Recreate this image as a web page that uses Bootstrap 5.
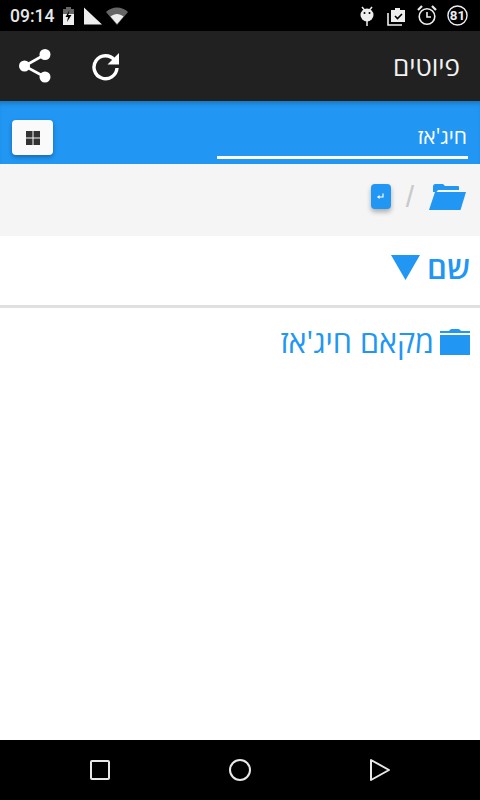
<!DOCTYPE html>
<html lang="he">
<head>
    <meta charset="UTF-8">
    <meta name="viewport" content="width=device-width, initial-scale=1.0">
    <title>פיוטים</title>
    <link href="https://cdn.jsdelivr.net/npm/bootstrap@5.3.0/dist/css/bootstrap.min.css" rel="stylesheet">
    <style>
        html, body { height: 800px; overflow: hidden; }
        body { font-family: "Open Sans", "Noto Sans", "Liberation Sans", sans-serif; background: #fff; }
        .phone { height: 800px; }
        .status-bar { height: 31px; background: #000; color: #e8e8e8; font: 500 17.500px Roboto, sans-serif; padding: 0 12px 0 10px; }
        .app-bar { height: 70px; background: #212121; color: #f2f2f2; font-size: 26px; font-weight: 500; padding: 0 20px 0 19px; }
        .search-bar { height: 63px; background: #2196f3; padding: 0 12px; box-shadow: inset 0 5px 5px -3px rgba(0,0,0,.25); }
        .grid-btn { width: 41px; height: 35px; background: #fafafa; border-radius: 4px; box-shadow: 0 2px 4px rgba(0,0,0,.3); margin-top: 10px; }
        .search-box { width: 251px; height: 40px; margin-top: 12px; border-bottom: 3px solid #fff; color: #fff; font-size: 21px; line-height: 35px; text-align: right; padding-right: 1px; }
        .crumbs { height: 72px; background: #f5f5f5; padding: 0 14px 7px 0; color: #c9c9c9; }
        .crumb-btn { width: 20px; height: 25px; border-radius: 4px; background: #2196f3; box-shadow: 0 3px 5px rgba(0,0,0,.3); }
        .crumb-sep { font-size: 30px; line-height: 1; margin: 0 15px; font-family: "Liberation Sans", sans-serif; }
        .head-row { height: 72px; border-bottom: 3px solid #e0e0e0; padding: 0 10px 7px; color: #2196f3; font-size: 31px; font-weight: 600; }
        .head-arrow { margin-right: 7px; }
        .file-row { height: 71px; padding: 0 10px 4px; color: #2196f3; font-size: 30.500px; }
        .file-name { margin-right: 6px; }
        .nav-bar { height: 60px; background: #000; margin-top: auto; }
        .nav-slot { width: 140px; }
    </style>
</head>
<body>
<div class="phone d-flex flex-column">
    <div class="status-bar d-flex align-items-center justify-content-between" dir="ltr">
        <div class="d-flex align-items-center">
            <span>09:14</span>
            <svg class="ms-2" width="13" height="20" viewBox="0 0 13 20"><rect x="4" y="1" width="5" height="2" fill="#666"/><rect x="1" y="3" width="11" height="5" fill="#666"/><rect x="1" y="8" width="11" height="11" fill="#eee"/><path d="M7.500 4 3.500 11h2.500l-1 5 4.500-7H6.300z" fill="#000"/></svg>
            <svg style="margin-left:9px" width="18" height="18" viewBox="0 0 18 18"><path d="M0 0 18 17H0z" fill="#eee" transform="translate(0 .5)"/></svg>
            <svg class="ms-1" width="22" height="18" viewBox="0 0 22 18"><path d="M0 5C6-1 16-1 22 5L11 18z" fill="#666"/><path d="M4.500 9.500c4-3.500 9-3.500 13 0L11 17z" fill="#eee"/></svg>
        </div>
        <div class="d-flex align-items-center">
            <svg width="16" height="20" viewBox="0 0 16 20"><circle cx="8" cy="9" r="6.500" fill="#eee"/><path d="M3 1l2.500 3M13 1l-2.500 3M8 15v5" stroke="#eee" stroke-width="1.500"/><circle cx="5.500" cy="7" r="1" fill="#000"/><circle cx="10.500" cy="7" r="1" fill="#000"/></svg>
            <svg style="margin-left:12px" width="19" height="20" viewBox="0 0 19 20"><path d="M4 4h4V2h5v2h5v12H4z" fill="#eee"/><path d="M8 10l2.500 2.500L15 8" stroke="#000" stroke-width="1.600" fill="none"/><path d="M1 7v12h14" stroke="#eee" stroke-width="1.600" fill="none"/></svg>
            <svg style="margin-left:11px" width="20" height="21" viewBox="0 0 20 21"><circle cx="10" cy="11.500" r="7.800" fill="none" stroke="#eee" stroke-width="1.600"/><path d="M10 7v5h4" fill="none" stroke="#eee" stroke-width="1.600"/><path d="M1 5l4-4M19 5l-4-4" stroke="#eee" stroke-width="2.200"/></svg>
            <svg style="margin-left:10px" width="21" height="21" viewBox="0 0 22 22"><circle cx="11" cy="11" r="10" fill="none" stroke="#eee" stroke-width="1.500"/><text x="11" y="16" text-anchor="middle" font-family="Roboto, sans-serif" font-weight="700" font-size="14" fill="#eee">81</text></svg>
        </div>
    </div>
    <div class="app-bar d-flex align-items-center justify-content-between" dir="ltr">
        <div class="d-flex align-items-center">
            <svg width="32" height="34" viewBox="0 0 32 34"><g fill="#fff"><circle cx="5.500" cy="17" r="5.500"/><circle cx="26" cy="5.500" r="5.500"/><circle cx="26" cy="28" r="5.500"/></g><path d="M26 5.500 5.500 17 26 28" fill="none" stroke="#fff" stroke-width="2.600"/></svg>
            <svg style="margin-left:40px" width="30" height="30" viewBox="0 0 30 30"><path d="M23.500 9A11.500 11.500 0 1 0 26 17" fill="none" stroke="#fff" stroke-width="3.400"/><path d="M28 2V13.500H16.500z" fill="#fff"/></svg>
        </div>
        <div dir="rtl">פיוטים</div>
    </div>
    <div class="search-bar d-flex justify-content-between align-items-center" dir="ltr">
        <div class="grid-btn d-flex align-items-center justify-content-center">
            <svg width="14" height="14" viewBox="0 0 14 14" fill="#333"><rect width="6.500" height="6.500"/><rect x="7.500" width="6.500" height="6.500"/><rect y="7.500" width="6.500" height="6.500"/><rect x="7.500" y="7.500" width="6.500" height="6.500"/></svg>
        </div>
        <div class="search-box" dir="rtl">חיג'אז</div>
    </div>
    <div class="crumbs d-flex align-items-center" dir="rtl">
        <svg width="37" height="27" viewBox="0 0 37 27" fill="#2196f3"><path d="M4 9V3.500Q4 1 6 1h8l2 2h13q1 0 1 1V7H9L7.500 9z"/><path d="M6 9h31l-5.500 18H0z"/></svg>
        <span class="crumb-sep">/</span>
        <div class="crumb-btn d-flex align-items-center justify-content-center">
            <svg width="7" height="7" viewBox="0 0 7 7"><path d="M6 0.500V4H2" fill="none" stroke="#fff" stroke-width="1.200"/><path d="M0 4l2.500-2v4z" fill="#fff"/></svg>
        </div>
    </div>
    <div class="head-row d-flex align-items-center" dir="rtl">
        <span>שם</span>
        <svg class="head-arrow" width="29" height="25" viewBox="0 0 29 25" fill="#2196f3"><path d="M0 0h29L14.500 25z"/></svg>
    </div>
    <div class="file-row d-flex align-items-center" dir="rtl">
        <svg width="30" height="26" viewBox="0 0 30 26" fill="#2196f3"><path d="M9 2Q10 0 12 0h6q2 0 3 2h9v2H0V2z"/><rect y="6" width="30" height="20"/></svg>
        <span class="file-name">מקאם חיג'אז</span>
    </div>
    <div class="nav-bar d-flex align-items-center justify-content-center" dir="ltr">
        <div class="nav-slot d-flex justify-content-center"><svg width="20" height="20" viewBox="0 0 20 20"><rect x="1" y="1" width="18" height="18" rx="1" fill="none" stroke="#e8e8e8" stroke-width="2"/></svg></div>
        <div class="nav-slot d-flex justify-content-center"><svg width="22" height="22" viewBox="0 0 22 22"><circle cx="11" cy="11" r="10" fill="none" stroke="#e8e8e8" stroke-width="2"/></svg></div>
        <div class="nav-slot d-flex justify-content-center"><svg width="20" height="24" viewBox="0 0 20 24"><path d="M1 2v20l18-10z" fill="none" stroke="#e8e8e8" stroke-width="2" stroke-linejoin="round"/></svg></div>
    </div>
</div>
<script src="https://cdn.jsdelivr.net/npm/bootstrap@5.3.0/dist/js/bootstrap.bundle.min.js"></script>
</body>
</html>
